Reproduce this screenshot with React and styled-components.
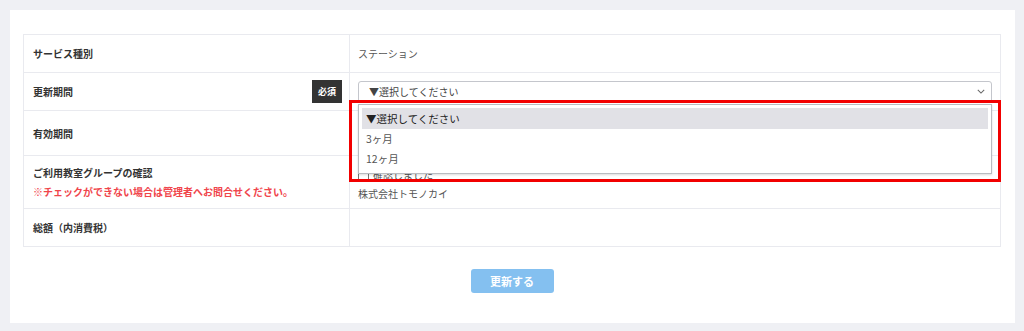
import React from "react";
import styled, { createGlobalStyle } from "styled-components";

const GlobalStyle = createGlobalStyle`
  body {
    margin: 0;
    background: #eff0f4;
    font-family: "Noto Sans CJK JP", "Noto Sans", sans-serif;
    color: #333;
  }
`;

const App = () => {
  return (
    <>
      <GlobalStyle />
      <Page>
        <Card>
          <Table>
            <colgroup>
              <col style={{ width: 326 }} />
              <col />
            </colgroup>
            <tbody>
              <Row h={38}>
                <Label>サービス種別</Label>
                <Value>ステーション</Value>
              </Row>
              <Row h={38}>
                <Label>
                  <LabelFlex>
                    更新期間
                    <Badge>必須</Badge>
                  </LabelFlex>
                </Label>
                <Value>
                  <SelectWrap>
                    <Select>
                      <span>▼選択してください</span>
                      <Chevron viewBox="0 0 10 6">
                        <path d="M1 1l4 4 4-4" fill="none" stroke="#666" strokeWidth="1.3" />
                      </Chevron>
                    </Select>
                    <Dropdown>
                      <Option active>▼選択してください</Option>
                      <Option>3ヶ月</Option>
                      <Option>12ヶ月</Option>
                    </Dropdown>
                    <Highlight />
                  </SelectWrap>
                </Value>
              </Row>
              <Row h={45}>
                <Label>有効期間</Label>
                <Value></Value>
              </Row>
              <Row h={53}>
                <Label>
                  <div>ご利用教室グループの確認</div>
                  <Note>※チェックができない場合は管理者へお問合せください。</Note>
                </Label>
                <Value>
                  <Check>
                    <Box />
                    確認しました
                  </Check>
                  <div>株式会社トモノカイ</div>
                </Value>
              </Row>
              <Row h={38}>
                <Label>総額（内消費税）</Label>
                <Value></Value>
              </Row>
            </tbody>
          </Table>
          <ButtonBar>
            <Button>更新する</Button>
          </ButtonBar>
        </Card>
      </Page>
    </>
  );
};
export default App;

const Page = styled.div`
  padding: 10px 9px 8px 10px;
`;
const Card = styled.div`
  background: #fff;
  padding: 24px 14px 31px 13px;
  height: 313px;
  box-sizing: border-box;
`;
const Table = styled.table`
  width: 100%;
  table-layout: fixed;
  border-collapse: collapse;
  font-size: 10px;
`;
const Row = styled.tr`
  height: ${(p) => p.h}px;
`;
const Label = styled.td`
  border: 1px solid #e9eaef;
  padding: 0 7px 0 9px;
  font-weight: bold;
  color: #333;
  vertical-align: middle;
  line-height: 19px;
`;
const LabelFlex = styled.div`
  display: flex;
  justify-content: space-between;
  align-items: center;
`;
const Badge = styled.span`
  background: #333;
  color: #fff;
  font-size: 9px;
  font-weight: bold;
  width: 30px;
  height: 23px;
  display: flex;
  align-items: center;
  justify-content: center;
`;
const Note = styled.div`
  color: #f0454b;
`;
const Value = styled.td`
  border: 1px solid #e9eaef;
  padding: 0 8px;
  color: #555;
  vertical-align: middle;
  line-height: 19px;
`;
const SelectWrap = styled.div`
  position: relative;
`;
const Select = styled.div`
  height: 22px;
  box-sizing: border-box;
  border: 1px solid #c4c6cc;
  border-radius: 3px;
  display: flex;
  align-items: center;
  justify-content: space-between;
  padding: 0 6px 0 10px;
  color: #444;
`;
const Chevron = styled.svg`
  width: 8px;
  height: 5px;
`;
const Dropdown = styled.div`
  position: absolute;
  left: 0;
  right: 0;
  top: 23px;
  height: 70px;
  box-sizing: border-box;
  background: #fff;
  border: 1px solid #b9bbc0;
  box-shadow: 0 1px 2px rgba(0, 0, 0, 0.15);
  padding: 3px 3px;
  z-index: 2;
`;
const Option = styled.div`
  height: ${(p) => (p.active ? 21 : 20)}px;
  display: flex;
  align-items: center;
  padding-left: 4px;
  font-size: 10.5px;
  color: ${(p) => (p.active ? "#222" : "#555")};
  background: ${(p) => (p.active ? "#e1e1e6" : "transparent")};
`;
const Highlight = styled.div`
  position: absolute;
  left: -9px;
  right: -9px;
  top: 19px;
  height: 82px;
  box-sizing: border-box;
  border: 3px solid #f20000;
  z-index: 3;
`;
const Check = styled.div`
  display: flex;
  align-items: center;
  gap: 4px;
  margin-top: 4px;
`;
const Box = styled.span`
  width: 9px;
  height: 9px;
  border: 1px solid #777;
  border-radius: 1px;
`;
const ButtonBar = styled.div`
  display: flex;
  justify-content: center;
  margin-top: 22px;
`;
const Button = styled.div`
  width: 83px;
  height: 24px;
  border-radius: 3px;
  background: #84c0f0;
  color: #fff;
  font-size: 11px;
  font-weight: bold;
  display: flex;
  align-items: center;
  justify-content: center;
`;
